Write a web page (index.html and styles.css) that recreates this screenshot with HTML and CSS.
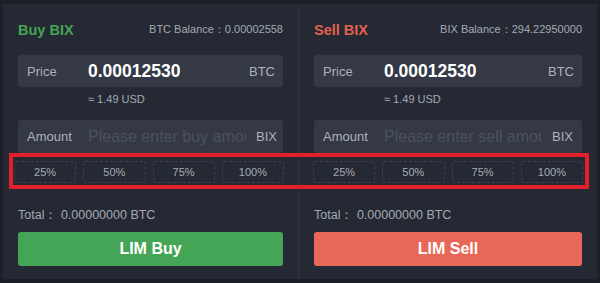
FILE: index.html
```html
<!DOCTYPE html>
<html>
<head>
<meta charset="utf-8">
<link rel="stylesheet" href="styles.css">
</head>
<body>
<div class="panel">
  <section class="col col-buy">
    <div class="head">
      <span class="title buy">Buy BIX</span>
      <span class="bal">BTC Balance：0.00002558</span>
    </div>
    <div class="field">
      <span class="label">Price</span>
      <span class="value">0.00012530</span>
      <span class="unit">BTC</span>
    </div>
    <div class="usd">≈ 1.49 USD</div>
    <div class="field">
      <span class="label">Amount</span>
      <input class="amount" type="text" placeholder="Please enter buy amount">
      <span class="unit">BIX</span>
    </div>
    <div class="pcts pcts-buy">
      <span class="pct">25%</span><span class="pct">50%</span><span class="pct">75%</span><span class="pct">100%</span>
    </div>
    <div class="total">Total：&nbsp;0.00000000 BTC</div>
    <button class="action act-buy">LIM Buy</button>
  </section>
  <section class="col col-sell">
    <div class="head">
      <span class="title sell">Sell BIX</span>
      <span class="bal">BIX Balance：294.22950000</span>
    </div>
    <div class="field">
      <span class="label">Price</span>
      <span class="value">0.00012530</span>
      <span class="unit">BTC</span>
    </div>
    <div class="usd">≈ 1.49 USD</div>
    <div class="field">
      <span class="label">Amount</span>
      <input class="amount" type="text" placeholder="Please enter sell amount">
      <span class="unit">BIX</span>
    </div>
    <div class="pcts pcts-sell">
      <span class="pct">25%</span><span class="pct">50%</span><span class="pct">75%</span><span class="pct">100%</span>
    </div>
    <div class="total">Total：&nbsp;0.00000000 BTC</div>
    <button class="action act-sell">LIM Sell</button>
  </section>
</div>
<div class="highlight"></div>
</body>
</html>
```
FILE: styles.css
```css
* { box-sizing: border-box; }
html, body { margin: 0; padding: 0; }
body {
  width: 600px;
  height: 283px;
  background: #1c1f27;
  font-family: "Liberation Sans", Arial, sans-serif;
  position: relative;
  overflow: hidden;
}
.panel {
  margin: 4px 3px 0 3px;
  height: 275px;
  background: #252933;
  display: grid;
  grid-template-columns: 296px 298px;
}
.col {
  padding: 0 15px;
  display: flex;
  flex-direction: column;
}
.col-buy { border-right: 1px dotted #3a3f4a; }
.col-sell { padding-left: 15px; }
.head {
  height: 51px;
  display: flex;
  align-items: center;
  justify-content: space-between;
}
.title { font-size: 14.5px; font-weight: bold; }
.title.buy { color: #45a556; }
.title.sell { color: #e4604e; }
.bal { font-size: 11px; color: #a3a9b3; }
.field {
  height: 32px;
  background: #343945;
  border-radius: 3px;
  display: flex;
  align-items: center;
  padding: 0 8px 0 9px;
}
.field + .usd + .field { height: 33px; }
.label { width: 61px; font-size: 13px; color: #adb2bb; flex: none; }
.value { flex: 1; font-size: 17.5px; font-weight: bold; color: #ffffff; }
.unit { font-size: 13px; color: #adb2bb; flex: none; }
.amount {
  flex: none;
  width: 158px;
  margin-right: 10px;
  border: 0;
  padding: 0;
  background: transparent;
  font-family: "Liberation Sans", Arial, sans-serif;
  font-size: 16px;
  outline: none;
  color: #ffffff;
}
.amount::placeholder { color: #4b515d; }
.usd {
  height: 33px;
  line-height: 25px;
  padding-left: 70px;
  font-size: 11px;
  color: #a3a9b3;
}
.pcts {
  margin-top: 8px;
  height: 22px;
  display: grid;
  grid-template-columns: repeat(4, 1fr);
  gap: 7px;
}
.pcts-buy { margin-left: -4px; margin-right: -1px; }
.pcts-sell { margin-left: -1px; margin-right: -1px; }
.pct {
  border: 1px dashed #3b404b;
  border-radius: 2px;
  display: flex;
  align-items: center;
  justify-content: center;
  font-size: 11px;
  color: #a7acb5;
}
.total {
  height: 49px;
  display: flex;
  align-items: center;
  padding-top: 15px;
  font-size: 12.5px;
  color: #a3a9b3;
}
.action {
  height: 34px;
  border: 0;
  border-radius: 3px;
  color: #ffffff;
  font-family: "Liberation Sans", Arial, sans-serif;
  font-size: 16px;
  font-weight: bold;
  padding: 0;
}
.act-buy { background: #45a556; }
.act-sell { background: #e86756; }
.highlight {
  position: absolute;
  left: 9px;
  top: 153px;
  width: 580px;
  height: 36px;
  border: 4px solid #e3202a;
}
```
